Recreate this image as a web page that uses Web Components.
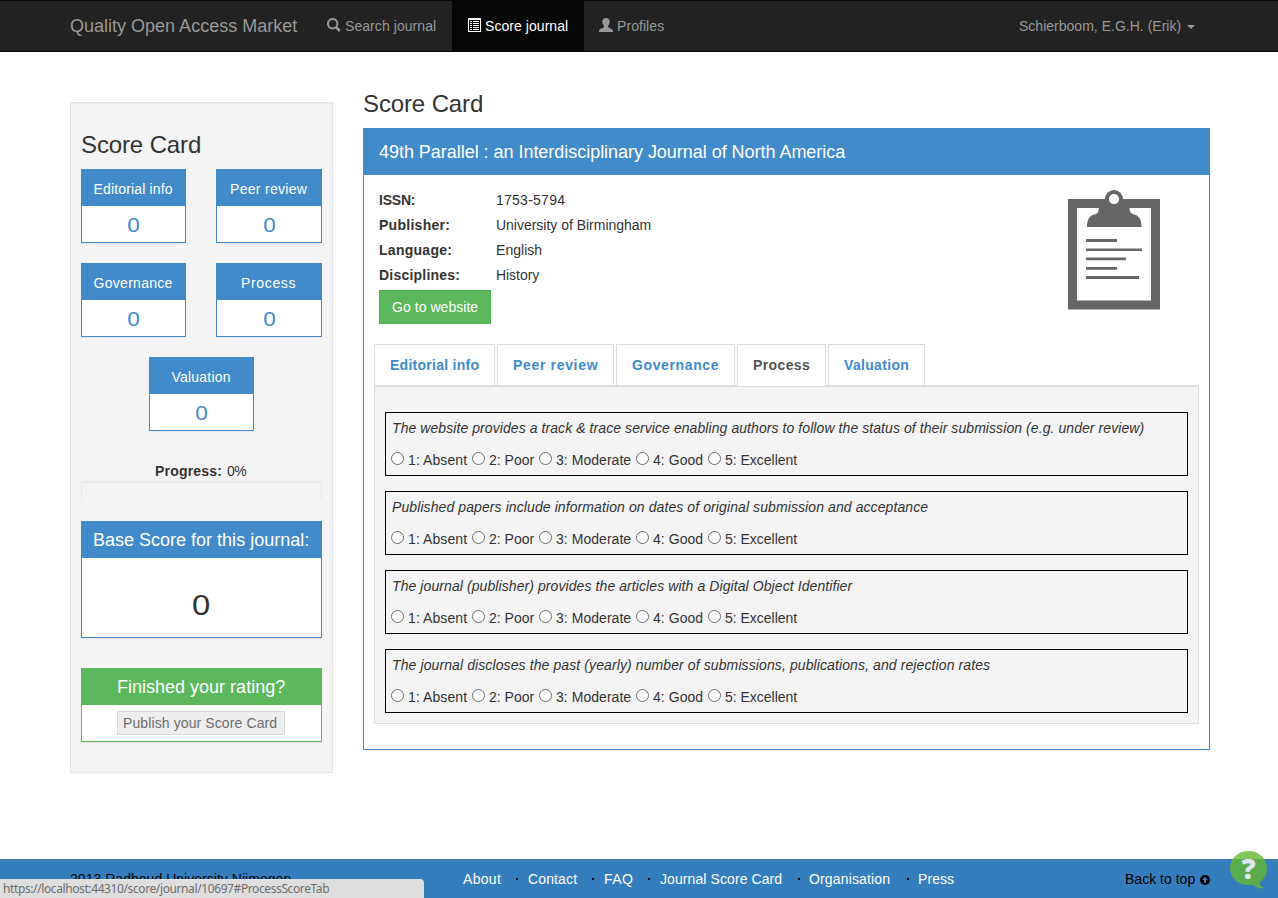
<!DOCTYPE html>
<html lang="en">
<head>
<meta charset="utf-8">
<title>Quality Open Access Market</title>
<style>
body{margin:0;background:#fff;color:#333;font:14px/20px "Liberation Sans",Arial,sans-serif;height:898px;overflow:hidden}
</style>
</head>
<body>
<score-page></score-page>
<script>
const define = (name, css, html, ready) => {
  const t = document.createElement('template');
  t.innerHTML = `<style>*{box-sizing:border-box}:host{display:block;box-sizing:border-box}${css}</style>${html}`;
  customElements.define(name, class extends HTMLElement {
    connectedCallback() {
      if (this.shadowRoot) return;
      this.attachShadow({mode: 'open'}).append(t.content.cloneNode(true));
      if (ready) ready(this, this.shadowRoot);
    }
  });
};

/* Single line of text tracked to a fixed measure: <text-run w="120"> */
define('text-run', ':host{display:inline-block;white-space:pre;text-align:left}', '<span><slot></slot></span>', (el, root) => {
  const w = +el.getAttribute('w');
  const span = root.querySelector('span');
  const n = el.textContent.length;
  if (!w) return;
  el.style.width = w + 'px';
  span.style.letterSpacing = (w - .8 - span.getBoundingClientRect().width) / n + 'px';
});

define('nav-item', `
:host{height:50px;padding:15px 15px;display:flex;align-items:flex-start;color:#999}
:host([active]){background:#080808;color:#fff}
svg{width:14px;height:14px;margin:2px 4px 0 0;fill:currentColor;flex:none}
:host([active]) svg{margin-left:1px;margin-right:3px}`,
'<svg viewBox="0 0 14 14"></svg><slot></slot>', (el, root) => {
  root.querySelector('svg').innerHTML = {
    search: '<path fill-rule="evenodd" d="M5.7 0a5.7 5.7 0 0 1 4.7 8.8l3.3 3.1-1.9 2-3.2-3.3A5.7 5.7 0 1 1 5.7 0zm0 2a3.7 3.7 0 1 0 0 7.4 3.7 3.7 0 0 0 0-7.4z"/>',
    list: '<path fill-rule="evenodd" d="M0 0h13v14H0zM1 2v11h11V2zM2 3h2v1H2zm3 0h6v1H5zM2 5h2v1H2zm3 0h6v1H5zM2 7h2v1H2zm3 0h6v1H5zM2 9h2v1H2zm3 0h6v1H5zM2 11h2v1H2zm3 0h6v1H5z"/>',
    user: '<path d="M7 0c2.300 0 3.700 1.400 3.700 3.800 0 1.700-.7 3.200-1.700 4.100v1.200c0 .7 4.200 1.600 4.700 3 .2.500.3 1.200.3 1.900H0c0-.7.100-1.400.3-1.900.5-1.400 4.700-2.300 4.700-3V7.900C4 7 3.300 5.500 3.300 3.800 3.300 1.400 4.700 0 7 0z"/>'
  }[el.getAttribute('icon')];
});

define('nav-bar', `
:host{height:52px;background:#222;border:solid #080808;border-width:1px 0;padding:0 83px 0 70px;display:flex;color:#999}
.brand{font-size:18px;padding-top:15px;margin-right:14px}
.user{margin-left:auto;padding-top:15px;display:flex}
i{border:4px solid transparent;border-top-color:#999;border-bottom:0;margin:9px 0 0 5px;height:0}`,
`<div class="brand"><text-run w="228">Quality Open Access Market</text-run></div>
<nav-item icon="search"><text-run w="92">Search journal</text-run></nav-item>
<nav-item icon="list" active><text-run w="84">Score journal</text-run></nav-item>
<nav-item icon="user"><text-run w="48">Profiles</text-run></nav-item>
<div class="user"><text-run w="163">Schierboom, E.G.H. (Erik)</text-run><i></i></div>`);

define('score-panel', `
:host{--c:#428bca;border:1px solid var(--c);background:#fff;text-align:center;box-shadow:0 1px 1px rgba(0,0,0,.05)}
:host([green]){--c:#5cb85c}
.h{background:var(--c);color:#fff;height:36px;padding-top:9px}
:host([big]) .h{font-size:18px;padding-top:8px}
.b{display:flex;justify-content:center;align-items:center;height:var(--body,37px)}`,
'<div class="h"><slot name="title"></slot></div><div class="b"><slot></slot></div>');

define('score-digit', ':host{color:#428bca;font-size:20px;line-height:20px;transform:scaleX(1.13);padding:1px 0 0 1px}:host([large]){color:#333;font-size:29px;line-height:28px;padding:14px 1px 0 0}', '<slot></slot>');

define('side-card', `
:host{width:263px;height:671px;margin-top:50px;background:#f4f4f4;border:1px solid #e3e3e3;box-shadow:inset 0 1px 1px rgba(0,0,0,.05);padding:28px 10px 0;flex:none}
h3{font-size:24px;line-height:28px;font-weight:400;margin:0 0 10px}
.grid{display:grid;grid-template-columns:105px 106px;column-gap:30px;row-gap:20px}
.mid{width:105px;margin:20px 0 0 68px}
.p{margin-top:30px;height:20px;text-align:center;padding-right:1px}
.bar{height:20px;border:solid #e9e9e9;border-width:1px 1px 0;box-shadow:inset 0 1px 1px rgba(0,0,0,.05);margin-bottom:20px}
button{display:block;font:14px/20px "Liberation Sans",Arial,sans-serif;width:168px;height:24px;padding:0;margin-right:2px;border:1px solid #d9d9d9;background:#eee;color:#6d6d6d}
score-panel{height:74px}`,
`<h3><text-run w="121">Score Card</text-run></h3>
<div class="grid">
<score-panel><text-run slot="title" w="80">Editorial info</text-run><score-digit>0</score-digit></score-panel>
<score-panel><text-run slot="title" w="78">Peer review</text-run><score-digit>0</score-digit></score-panel>
<score-panel><text-run slot="title" w="80">Governance</text-run><score-digit>0</score-digit></score-panel>
<score-panel><text-run slot="title" w="56">Process</text-run><score-digit>0</score-digit></score-panel>
</div>
<score-panel class="mid"><text-run slot="title" w="60">Valuation</text-run><score-digit>0</score-digit></score-panel>
<div class="p"><b><text-run w="72">Progress: </text-run></b><text-run w="20">0%</text-run></div>
<div class="bar"></div>
<score-panel big style="height:117px;--body:80px"><text-run slot="title" w="217">Base Score for this journal:</text-run><score-digit large>0</score-digit></score-panel>
<score-panel big green style="margin-top:30px;--body:36px"><text-run slot="title" w="169">Finished your rating?</text-run><button><text-run w="155">Publish your Score Card</text-run></button></score-panel>`);

define('clip-board', ':host{width:92px;height:120px}svg{display:block}',
`<svg width="92" height="120" viewBox="0 0 92 120" fill="#666"><path fill-rule="evenodd" d="M0 9h37a9 9 0 0 1 18 0h37v110.500H0zM9 18v92.500h74V18H61.500c0 4 1.500 6 4.500 6.500 5 1 7.500 5 7.500 12.500H19c0-7.500 2.500-11.500 7.500-12.500 3-.5 4-2.500 4.500-6.500zM46 4a5 5 0 1 0 0 10.200A5 5 0 0 0 46 4z"/><path d="M18 49h31v3H18zM18 58.500h56v2.500H18zM18 67.500h40v2.700H18zM18 77h31v2.700H18zM18 86h53v3H18z"/></svg>`);

define('tab-item', `
:host{flex:none;height:41px;border:1px solid #ddd;border-bottom:0;background:#fff;color:#428bca;font-weight:700;display:flex;justify-content:center;padding:10px 0 0 1px;margin-right:2px}
:host([active]){color:#555;height:42px}`, '<slot></slot>');

define('score-question', `
:host{height:64px;border:1px solid #000;padding:5px 5px 0;margin-bottom:15px}
.q{font-style:italic;height:20px;padding-left:1px}
.o{display:flex;height:20px;margin-top:12px}
i{width:13px;height:13px;border:1px solid #6b6b6b;border-radius:50%;background:#fff;margin:2px 4px 0 0}
text-run{margin-right:4px}`,
`<div class="q"><slot></slot></div><div class="o"><i></i><text-run w="60">1: Absent</text-run><i></i><text-run w="46">2: Poor</text-run><i></i><text-run w="76">3: Moderate</text-run><i></i><text-run w="51">4: Good</text-run><i></i><text-run w="73">5: Excellent</text-run></div>`);

define('journal-card', `
:host{width:847px;padding-top:38px}
h3{font-size:24px;line-height:28px;font-weight:400;margin:0 0 10px}
.panel{height:622px;border:1px solid #428bca;box-shadow:0 1px 1px rgba(0,0,0,.05)}
.h{height:46px;background:#428bca;color:#fff;font-size:18px;padding:13px 15px 0}
.info{display:flex;justify-content:space-between;height:169px;padding:15px 49px 0 15px}
dl{display:grid;grid-template-columns:117px auto;margin:0;grid-auto-rows:25px;height:100px}
dt{font-weight:700}dd{margin:0}
.btn{display:block;width:112px;height:34px;background:#5cb85c;border:1px solid #4cae4c;color:#fff;padding:6px 0 0 12px;text-decoration:none}
.tabs{display:flex;height:42px;margin:0 10px;border-bottom:1px solid #ddd}
.content{margin:0 10px;height:338px;border:1px solid #ddd;background:#f4f4f4;padding:25px 10px 0}`,
`<h3><text-run w="121">Score Card</text-run></h3>
<div class="panel"><div class="h"><text-run w="467">49th Parallel : an Interdisciplinary Journal of North America</text-run></div>
<div class="info"><div><dl>
<dt><text-run w="37">ISSN:</text-run></dt><dd><text-run w="70">1753-5794</text-run></dd>
<dt><text-run w="72">Publisher:</text-run></dt><dd><text-run w="156">University of Birmingham</text-run></dd>
<dt><text-run w="74">Language:</text-run></dt><dd><text-run w="47">English</text-run></dd>
<dt><text-run w="82">Disciplines:</text-run></dt><dd><text-run w="44">History</text-run></dd></dl>
<a class="btn"><text-run w="87">Go to website</text-run></a></div><clip-board></clip-board></div>
<div class="tabs">
<tab-item style="width:121px"><text-run w="90">Editorial info</text-run></tab-item>
<tab-item style="width:117px"><text-run w="86">Peer review</text-run></tab-item>
<tab-item style="width:119px"><text-run w="88">Governance</text-run></tab-item>
<tab-item active style="width:89px"><text-run w="58">Process</text-run></tab-item>
<tab-item style="width:97px"><text-run w="66">Valuation</text-run></tab-item></div>
<div class="content">
<score-question><text-run w="753">The website provides a track &amp; trace service enabling authors to follow the status of their submission (e.g. under review)</text-run></score-question>
<score-question><text-run w="537">Published papers include information on dates of original submission and acceptance</text-run></score-question>
<score-question><text-run w="461">The journal (publisher) provides the articles with a Digital Object Identifier</text-run></score-question>
<score-question><text-run w="599">The journal discloses the past (yearly) number of submissions, publications, and rejection rates</text-run></score-question>
</div></div>`);

define('page-footer', `
:host{height:39px;background:#357ebd;color:#000;padding:10px 68px 0 70px;display:flex}
nav{display:flex;margin-left:171px;color:#fff}
i{width:2px;height:2px;background:#000;margin:9px 0 0}
.top{margin-left:auto;display:flex}
svg{margin:6px 0 0 4px}`,
`<text-run w="222">2013 Radboud University Nijmegen</text-run>
<nav><text-run w="39">About</text-run><i style="margin-left:14px;margin-right:10px"></i>
<text-run w="50">Contact</text-run><i style="margin-left:14px;margin-right:10px"></i>
<text-run w="30">FAQ</text-run><i style="margin-left:14px;margin-right:10px"></i>
<text-run w="123">Journal Score Card</text-run><i style="margin-left:15px;margin-right:9px"></i>
<text-run w="82">Organisation</text-run><i style="margin-left:16px;margin-right:9px"></i>
<text-run w="37">Press</text-run></nav>
<div class="top"><text-run w="71">Back to top</text-run><svg width="10" height="10" viewBox="0 0 10 10"><circle cx="5" cy="5" r="5"/><path d="M5 1.800 8 5.100H6v2.700H4V5.100H2z" fill="#357ebd"/></svg></div>`);

define('status-bar', ':host{position:absolute;left:0;bottom:0;width:424px;height:19px;background:#dedede;color:#6d6d6d;border-radius:0 4px 0 0;font:12px/19px "Noto Sans","Open Sans",sans-serif;padding-left:3px}',
'<text-run w="327">https://localhost:44310/score/journal/10697#ProcessScoreTab</text-run>');

define('help-bubble', ':host{position:absolute;left:1230px;top:851px;width:38px;height:38px;font:800 28px/34px "Open Sans",sans-serif;color:#dce6f5;text-align:center;isolation:isolate}svg{position:absolute;inset:0;z-index:-1}span{display:block;width:37px}',
`<svg width="38" height="38"><path d="M18.500 0C29 0 37 7.500 37 17.500c0 6-3 11-7.500 14 0 2.500 1.500 4.500 4.500 5.300-3.500 1.500-8 .2-10.500-3.300-1.500.400-3 .500-5 .500C8 34 0 27 0 17.300 0 7.500 8 0 18.500 0z" fill="rgb(101,184,49)" fill-opacity=".8"/></svg><span>?</span>`);

define('score-page', `
:host{position:relative;height:898px;display:flex;flex-direction:column}
main{flex:1;display:flex;gap:30px;padding-left:70px}`,
`<nav-bar></nav-bar><main><side-card></side-card><journal-card></journal-card></main><page-footer></page-footer><status-bar></status-bar><help-bubble></help-bubble>`);
</script>
</body>
</html>
